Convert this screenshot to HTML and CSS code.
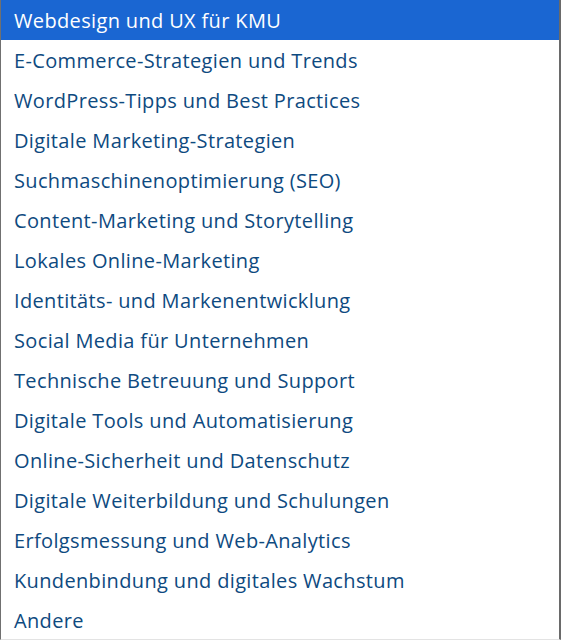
FILE: index.html
```html
<!DOCTYPE html>
<html lang="de">
<head>
<meta charset="utf-8">
<title>Themen</title>
<link rel="stylesheet" href="styles.css">
</head>
<body>
<ul class="listbox" role="listbox">
  <li class="option selected" role="option">Webdesign und UX für KMU</li>
  <li class="option" role="option">E-Commerce-Strategien und Trends</li>
  <li class="option" role="option">WordPress-Tipps und Best Practices</li>
  <li class="option" role="option">Digitale Marketing-Strategien</li>
  <li class="option" role="option">Suchmaschinenoptimierung (SEO)</li>
  <li class="option" role="option">Content-Marketing und Storytelling</li>
  <li class="option" role="option">Lokales Online-Marketing</li>
  <li class="option" role="option">Identitäts- und Markenentwicklung</li>
  <li class="option" role="option">Social Media für Unternehmen</li>
  <li class="option" role="option">Technische Betreuung und Support</li>
  <li class="option" role="option">Digitale Tools und Automatisierung</li>
  <li class="option" role="option">Online-Sicherheit und Datenschutz</li>
  <li class="option" role="option">Digitale Weiterbildung und Schulungen</li>
  <li class="option" role="option">Erfolgsmessung und Web-Analytics</li>
  <li class="option" role="option">Kundenbindung und digitales Wachstum</li>
  <li class="option" role="option">Andere</li>
</ul>
</body>
</html>
```
FILE: styles.css
```css
html, body {
  margin: 0;
  padding: 0;
  background: #ffffff;
}
.listbox {
  list-style: none;
  margin: 0;
  padding: 0;
  width: 558px;
  height: 639px;
  border-left: 1px solid #707070;
  border-right: 2px solid #6a6a6a;
  border-bottom: 1px solid #e3e3e3;
  overflow: hidden;
  font-family: "Open Sans", "Noto Sans", sans-serif;
  font-size: 20px;
  letter-spacing: 0.35px;
  color: #0e4a80;
}
.option {
  height: 40px;
  display: flex;
  align-items: center;
  padding-left: 13px;
  white-space: nowrap;
}
.option.selected {
  background: #1a66d2;
  color: #ffffff;
}
```
